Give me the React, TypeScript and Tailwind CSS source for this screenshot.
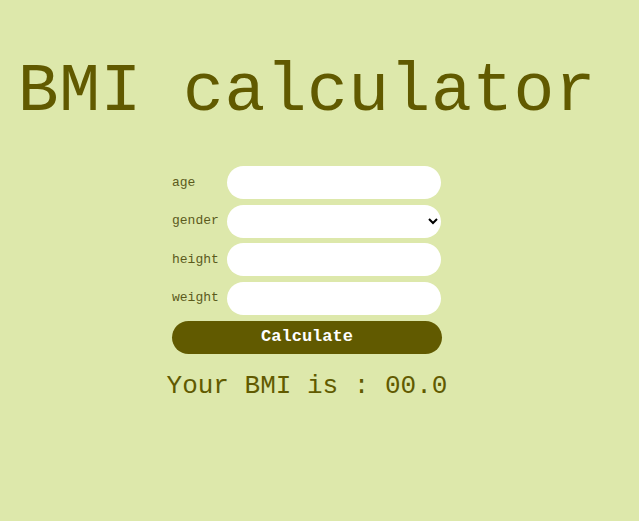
import React from 'react';

const Field: React.FC<{ label: string; children: React.ReactNode }> = ({ label, children }) => (
    <div className="flex items-center h-[33px]">
        <label className="w-[55px] text-[13px] text-[#5b5a1c]">{label}</label>
        {children}
    </div>
);

export default function App() {
    return (
        <div className="min-h-[521px] bg-[#dde8ab] font-['Liberation_Mono',monospace] text-[#615a00] pr-[25px]">
            <h1 className="pt-[53px] text-center text-[68px] leading-[78px] tracking-[0.5px]">BMI calculator</h1>
            <div className="mt-[35px] mx-auto w-[270px] flex flex-col gap-[5.5px]">
                <Field label="age">
                    <input className="w-[214px] h-[33px] rounded-full bg-white outline-none px-3" />
                </Field>
                <Field label="gender">
                    <select className="w-[214px] h-[33px] rounded-full bg-white outline-none pl-3 pr-1 text-black">
                        <option></option>
                    </select>
                </Field>
                <Field label="height">
                    <input className="w-[214px] h-[33px] rounded-full bg-white outline-none px-3" />
                </Field>
                <Field label="weight">
                    <input className="w-[214px] h-[33px] rounded-full bg-white outline-none px-3" />
                </Field>
                <button className="mt-[0.5px] w-[270px] h-[33px] rounded-full bg-[#615a00] text-white font-bold text-[17px]">Calculate</button>
            </div>
            <p className="mt-[16px] text-center text-[26px] leading-[32px]">Your BMI is : 00.0</p>
        </div>
    );
}
